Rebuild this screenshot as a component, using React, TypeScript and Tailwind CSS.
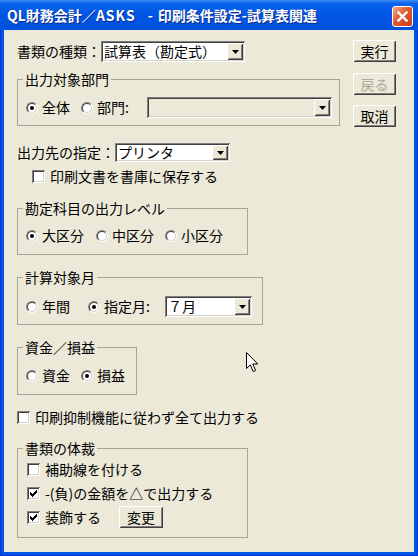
import type { ReactNode } from 'react'

// classic 3D edges
const RAISED =
  'shadow-[inset_1px_1px_0_#ffffff,inset_-1px_-1px_0_#404040,inset_2px_2px_0_#ece9d8,inset_-2px_-2px_0_#808080]'
const SUNKEN =
  'shadow-[inset_1px_1px_0_#808080,inset_-1px_-1px_0_#ffffff,inset_2px_2px_0_#404040,inset_-2px_-2px_0_#d4d0c8]'

function Combo({ value, className, disabled }: { value?: string; className: string; disabled?: boolean }) {
  return (
    <div className={`flex items-stretch p-[2px] ${SUNKEN} ${disabled ? 'bg-[#ece9d8]' : 'bg-white'} ${className}`}>
      <span className="flex-1 flex items-center pl-[1px] whitespace-nowrap">{value}</span>
      <span className={`w-[16px] flex items-center justify-center bg-[#ece9d8] ${RAISED}`}>
        <svg width="7" height="4" viewBox="0 0 7 4">
          <path d="M0 0h7L3.5 4z" fill="#000" />
        </svg>
      </span>
    </div>
  )
}

function Radio({ checked }: { checked?: boolean }) {
  return (
    <span className="relative w-[12px] h-[12px] shrink-0 rounded-full border border-t-[#808080] border-l-[#808080] border-r-white border-b-white">
      <span className="absolute inset-0 rounded-full bg-white border border-t-[#404040] border-l-[#404040] border-r-[#d4d0c8] border-b-[#d4d0c8] flex items-center justify-center">
        {checked && <span className="w-[4px] h-[4px] rounded-full bg-black" />}
      </span>
    </span>
  )
}

function RadioItem({ label, checked, className = '' }: { label: string; checked?: boolean; className?: string }) {
  return (
    <label className={`flex items-center gap-[4px] shrink-0 ${className}`}>
      <Radio checked={checked} />
      <span className="whitespace-nowrap">{label}</span>
    </label>
  )
}

function Check({ checked }: { checked?: boolean }) {
  const cols = [2, 3, 4, 3, 2, 1, 0]
  return (
    <span className={`w-[13px] h-[13px] shrink-0 bg-white flex items-center justify-center ${SUNKEN}`}>
      {checked && (
        <svg width="7" height="7" viewBox="0 0 7 7" shapeRendering="crispEdges">
          {cols.map((y, x) => (
            <rect key={x} x={x} y={y} width="1" height="3" fill="#000" />
          ))}
        </svg>
      )}
    </span>
  )
}

function CheckItem({ label, checked, className = '' }: { label: string; checked?: boolean; className?: string }) {
  return (
    <label className={`flex items-center gap-[5px] ${className}`}>
      <Check checked={checked} />
      <span className="whitespace-nowrap">{label}</span>
    </label>
  )
}

function Group({ title, className, children }: { title: string; className: string; children: ReactNode }) {
  return (
    <fieldset className={`border border-[#a7a598] pl-[5px] ${className}`}>
      <legend className="px-[2px] leading-[16px]">{title}</legend>
      {children}
    </fieldset>
  )
}

function Button({ children, disabled, className = '' }: { children: ReactNode; disabled?: boolean; className?: string }) {
  return (
    <button
      className={`w-[43px] h-[22px] bg-[#ece9d8] leading-[16px] ${RAISED} ${disabled ? 'text-[#aca899]' : 'text-black'} ${className}`}
    >
      {children}
    </button>
  )
}

export default function App() {
  return (
    <div className="relative w-[418px] h-[556px] flex flex-col bg-[#0055e5] border-x border-b border-[#0831d9] text-[14px] text-black font-['Noto_Sans_CJK_JP','Noto_Sans',sans-serif]">
      {/* title bar */}
      <div className="h-[30px] flex items-center justify-between pl-[7px] pr-[5px] -mx-px bg-[linear-gradient(to_bottom,#3d8ff8_0%,#0a62ea_12%,#0056e4_50%,#0050dc_100%)]">
        <span className="font-bold text-white leading-[16px] whitespace-nowrap [text-shadow:1px_1px_0_#0a2a8a]">
          QL財務会計／<span className="tracking-[1px]">ASKS</span>
          <span className="ml-[12px] mr-[5px]">-</span>印刷条件設定-試算表関連
        </span>
        <span className="mt-[2px] w-[21px] h-[21px] rounded-[3px] border border-white flex items-center justify-center bg-[linear-gradient(135deg,#f5a585_0%,#e25a30_45%,#c63f1a_100%)]">
          <svg width="11" height="11" viewBox="0 0 11 11">
            <path d="M1.5 1.5l8 8M9.5 1.5l-8 8" stroke="#fff" strokeWidth="2.4" strokeLinecap="square" />
          </svg>
        </span>
      </div>

      {/* body */}
      <div className="flex-1 mx-[3px] mb-[3px] bg-[#ece9d8] flex pl-[13px]">
        <div className="w-[323px] flex flex-col items-start pt-[11px]">
          <div className="flex items-center h-[21px]">
            <span className="w-[84px] whitespace-nowrap">書類の種類：</span>
            <Combo className="w-[144px] h-[21px]" value="試算表（勘定式）" />
          </div>

          <Group title="出力対象部門" className="mt-[9px] w-[323px] pb-[7px]">
            <div className="flex items-center h-[21px] mt-[10px]">
              <RadioItem checked label="全体" className="ml-[3px] w-[55px]" />
              <RadioItem label="部門:" className="w-[66px]" />
              <Combo disabled className="w-[185px] h-[21px]" />
            </div>
          </Group>

          <div className="flex items-center h-[19px] mt-[17px]">
            <span className="w-[98px] whitespace-nowrap">出力先の指定：</span>
            <Combo className="w-[115px] h-[19px]" value="プリンタ" />
          </div>

          <CheckItem label="印刷文書を書庫に保存する" className="h-[16px] mt-[6px] ml-[15px]" />

          <Group title="勘定科目の出力レベル" className="mt-[16px] w-[231px] pb-[8px]">
            <div className="flex items-center h-[21px] mt-[9px]">
              <RadioItem checked label="大区分" className="ml-[3px] w-[70px]" />
              <RadioItem label="中区分" className="w-[69px]" />
              <RadioItem label="小区分" />
            </div>
          </Group>

          <Group title="計算対象月" className="mt-[14px] w-[246px] pb-[7px]">
            <div className="flex items-center h-[21px] mt-[11px]">
              <RadioItem label="年間" className="ml-[3px] w-[62px]" />
              <RadioItem checked label="指定月:" className="w-[77px]" />
              <Combo className="w-[87px] h-[21px]" value="７月" />
            </div>
          </Group>

          <Group title="資金／損益" className="mt-[14px] w-[120px] pb-[8px]">
            <div className="flex items-center h-[21px] mt-[10px]">
              <RadioItem label="資金" className="ml-[3px] w-[55px]" />
              <RadioItem checked label="損益" />
            </div>
          </Group>

          <CheckItem label="印刷抑制機能に従わず全て出力する" className="h-[16px] mt-[14px]" />

          <Group title="書類の体裁" className="mt-[15px] w-[231px] pb-[9px]">
            <div className="flex flex-col gap-[2px] mt-[2px]">
              <CheckItem label="補助線を付ける" className="h-[22px] ml-[4px]" />
              <CheckItem checked label="-(負)の金額を△で出力する" className="h-[22px] ml-[4px]" />
              <div className="flex items-center h-[22px] ml-[4px]">
                <CheckItem checked label="装飾する" className="w-[92px]" />
                <Button className="w-[44px]">変更</Button>
              </div>
            </div>
          </Group>
        </div>

        <div className="flex flex-col pt-[10px] ml-[13px]">
          <Button>実行</Button>
          <Button disabled className="mt-[11px]">戻る</Button>
          <Button className="mt-[10px]">取消</Button>
        </div>
      </div>

      {/* mouse pointer */}
      <svg className="absolute left-[245px] top-[352px]" width="13" height="21" viewBox="0 0 13 21">
        <path
          d="M0.5 0.5V16.5L4.3 12.8L7.2 19.5L9.6 18.5L6.8 12H11.8Z"
          fill="#fff"
          stroke="#000"
          strokeWidth="1"
          strokeLinejoin="miter"
        />
      </svg>
    </div>
  )
}
